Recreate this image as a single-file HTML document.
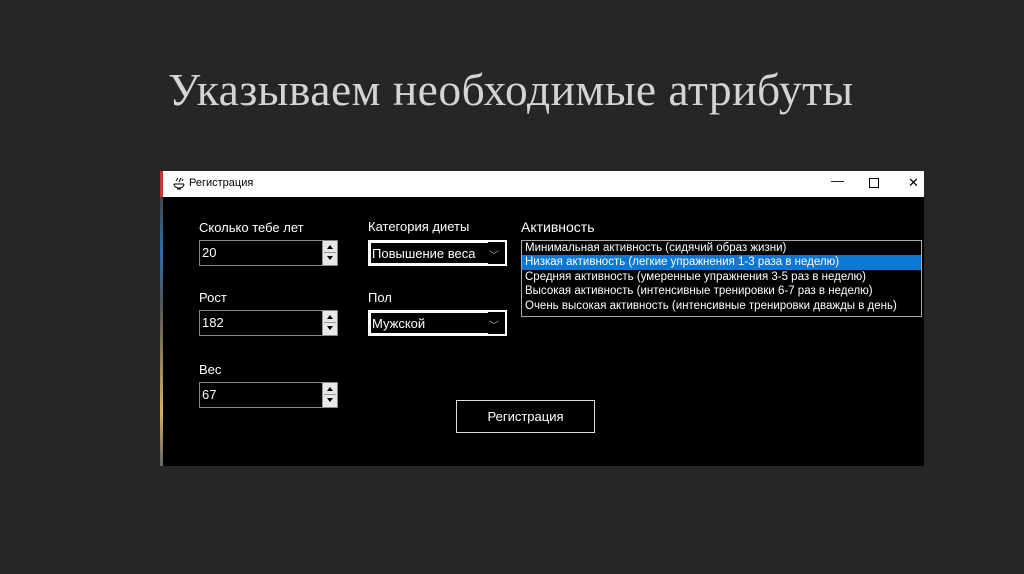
<!DOCTYPE html>
<html><head><meta charset="utf-8"><style>
*{margin:0;padding:0;box-sizing:border-box}
body{width:1024px;height:574px;overflow:hidden;background:#262626;position:relative;font-family:"Liberation Sans","Noto Sans CJK SC",sans-serif}
.title{position:absolute;left:168px;top:63px;font-family:"Liberation Serif","Noto Serif CJK SC",serif;font-size:45.5px;color:#d4d4d4;white-space:nowrap;letter-spacing:0.5px}
.win{position:absolute;left:160px;top:171px;width:764px;height:295px;background:#000}
.tb{position:absolute;left:0;top:0;width:764px;height:26px;background:#fff;border-left:3px solid #c33}
.tb .t{position:absolute;left:26px;top:6px;font-size:11px;color:#000}
.strip{position:absolute;left:0;top:26px;width:3px;height:269px;background:linear-gradient(#444,#2a6fb0 20%,#555 40%,#d4b060 80%,#666)}
.lbl{position:absolute;color:#fff;font-size:13px}
.spin{position:absolute;width:139px;height:26px;border:1px solid #888;background:#000;color:#fff;font-size:13px;padding:4px 0 0 2px}
.spin .b{position:absolute;right:0;top:0;width:15px;height:24px;background:#e8e8e8;border-left:1px solid #999}
.spin .b i{position:absolute;left:4px;width:0;height:0;border-left:3px solid transparent;border-right:3px solid transparent}
.spin .b .u{top:4px;border-bottom:4px solid #000}
.spin .b .d{top:15px;border-top:4px solid #000}
.spin .b:after{content:"";position:absolute;left:1px;right:1px;top:11px;border-top:1px solid #999}
.combo{position:absolute;width:139px;height:26px;border:2px solid #fff;background:#000;color:#fff;font-size:13px}
.combo .v{position:absolute;left:0;top:0;width:118px;height:22px;border:1px solid #fff;border-right:none;padding:3px 0 0 1px}
.combo .c{position:absolute;right:6px;top:5px;color:#aaa;font-size:10px}
.list{position:absolute;left:361px;top:69px;width:401px;height:77px;border:1px solid #aaa;color:#fff;font-size:11.5px}
.list div{height:14.4px;line-height:14px;padding-left:3px;white-space:nowrap}
.list .s{background:#0a78d4}
.btn{position:absolute;left:296px;top:229px;width:139px;height:33px;border:1px solid #ddd;color:#fff;font-size:13px;text-align:center;line-height:31px}
</style></head><body>
<div class="title">Указываем необходимые атрибуты</div>
<div class="win">
 <div class="tb">
  <svg style="position:absolute;left:9px;top:5px" width="14" height="15" viewBox="0 0 14 15"><path d="M2 8h10M2 8a5 4 0 0 0 10 0M5 13h4" stroke="#000" fill="none"/><path d="M4 5l2-3M7 6l2-4M10 5l1-2" stroke="#000"/></svg>
  <span class="t">Регистрация</span>
  <span style="position:absolute;left:668px;top:2px;font-size:13px;color:#000">—</span>
  <span style="position:absolute;left:706px;top:7px;width:10px;height:10px;border:1px solid #000"></span>
  <span style="position:absolute;left:745px;top:4px;font-size:13px;color:#000">✕</span>
 </div>
 <div class="strip"></div>
 <div class="lbl" style="left:39px;top:49px">Сколько тебе лет</div>
 <div class="spin" style="left:39px;top:69px">20<div class="b"><i class="u"></i><i class="d"></i></div></div>
 <div class="lbl" style="left:39px;top:119px">Рост</div>
 <div class="spin" style="left:39px;top:139px">182<div class="b"><i class="u"></i><i class="d"></i></div></div>
 <div class="lbl" style="left:39px;top:191px">Вес</div>
 <div class="spin" style="left:39px;top:211px">67<div class="b"><i class="u"></i><i class="d"></i></div></div>
 <div class="lbl" style="left:208px;top:48px">Категория диеты</div>
 <div class="combo" style="left:208px;top:69px"><div class="v">Повышение веса</div><span class="c">﹀</span></div>
 <div class="lbl" style="left:208px;top:119px">Пол</div>
 <div class="combo" style="left:208px;top:139px"><div class="v">Мужской</div><span class="c">﹀</span></div>
 <div class="lbl" style="left:361px;top:48px;font-size:14px">Активность</div>
 <div class="list">
  <div>Минимальная активность (сидячий образ жизни)</div>
  <div class="s">Низкая активность (легкие упражнения 1-3 раза в неделю)</div>
  <div>Средняя активность (умеренные упражнения 3-5 раз в неделю)</div>
  <div>Высокая активность (интенсивные тренировки 6-7 раз в неделю)</div>
  <div>Очень высокая активность (интенсивные тренировки дважды в день)</div>
 </div>
 <div class="btn">Регистрация</div>
</div>
</body></html>
